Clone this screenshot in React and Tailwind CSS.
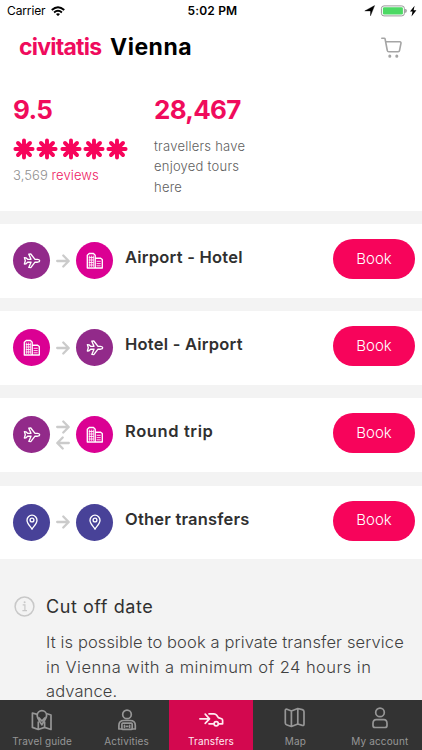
import React from "react";

const transfers = [
  { title: "Airport - Hotel", from: "plane", to: "hotel", spacing: "tracking-[0.0145em]" },
  { title: "Hotel - Airport", from: "hotel", to: "plane", spacing: "tracking-[0.0145em]" },
  { title: "Round trip", from: "plane", to: "hotel", spacing: "tracking-[0.037em]", round: true },
  { title: "Other transfers", from: "pin", to: "pin", spacing: "tracking-[0.013em]" },
];

const circleColors = {
  plane: "bg-[#922a8a]",
  hotel: "bg-[#db0093]",
  pin: "bg-[#484298]",
};

function Glyph({ type }) {
  return (
    <svg
      viewBox="0 0 18 18"
      className="size-[18px]"
      fill="none"
      stroke="white"
      strokeWidth="1.35"
      strokeLinejoin="round"
      strokeLinecap="round"
    >
      {type === "plane" && (
        <path d="M1.4 5.6 3 5.8 4.6 7.3H8L5.8 2.2 7.8 2 12 7.3H14.6C17.4 7.6 17.4 9.9 14.6 10.2H12L7.8 15.6 5.8 15.4 8 10.2H4.6L3 11.9 1.4 12 2.3 8.8Z" />
      )}
      {type === "hotel" && (
        <>
          <path d="M1.3 16V3.2L3.2 1.5H7.5L9.2 3.2V16ZM9.2 6.2H14.6L16.3 7.6V16H9.2" />
          <path
            d="M3.2 5.5H7.4M3.2 8H7.4M3.2 10.5H7.4M3.2 13H7.4M5.3 4V14.5M3.3 4V14.5M7.3 4V14.5M11 9.3H14.3M11 11.6H14.3M11 13.8H14.3"
            strokeWidth="0.85"
          />
        </>
      )}
      {type === "pin" && (
        <>
          <path d="M9 16.2C7.7 13.6 4 10.7 4 7.2A5 5 0 0 1 14 7.2C14 10.7 10.3 13.6 9 16.2Z" />
          <circle cx="9" cy="7" r="1.9" />
        </>
      )}
    </svg>
  );
}

function Circle({ type }) {
  return (
    <div className={`${circleColors[type]} size-[37px] rounded-full flex items-center justify-center`}>
      <Glyph type={type} />
    </div>
  );
}

function Arrow({ back }) {
  return (
    <svg
      viewBox="0 0 14 14"
      className={back ? "size-[14px] rotate-180" : "size-[14px]"}
      fill="none"
      stroke="#cbcbcb"
      strokeWidth="2.3"
      strokeLinecap="round"
      strokeLinejoin="round"
    >
      <path d="M1.2 7H12.4M7.3 1.5 12.7 7 7.3 12.5" />
    </svg>
  );
}

function Star() {
  return (
    <svg viewBox="0 0 22 22" className="size-[22px]" stroke="#f7045b" strokeWidth="3.9" strokeLinecap="round">
      <path d="M11 2.4V19.6M2.4 11H19.6M5 5 17 17M17 5 5 17" />
    </svg>
  );
}

function StatusBar() {
  return (
    <div className="h-[22px] flex items-center text-[12px] leading-none text-black relative">
      <span className="pl-[7px] w-[51px] tracking-[-0.01em]">Carrier</span>
      <svg viewBox="0 0 15 11" className="w-[14px] h-[10.5px]" fill="none" stroke="black" strokeWidth="2">
        <path d="M0.8 4.2Q7.5-1.8 14.2 4.2M3.3 6.9Q7.5 3.2 11.7 6.9" />
        <path d="M5.3 8.4Q7.5 6.7 9.7 8.4L7.5 10.7Z" fill="black" stroke="none" />
      </svg>
      <span className="ml-[122.5px] font-semibold tracking-[0.015em] whitespace-nowrap">5:02 PM</span>
      <svg viewBox="0 0 54 12" className="absolute left-[364px] top-[5px] w-[54px] h-[12px]">
        <path d="M10.6 0.6 6.5 10.8V5.9H0.8Z" fill="black" stroke="black" strokeWidth="0.4" />
        <rect x="17.4" y="0.9" width="23" height="10" rx="2.6" fill="none" stroke="#999" />
        <rect x="18.9" y="2.3" width="20" height="7.2" rx="1.3" fill="#4cd964" />
        <path d="M41.7 4.1Q43.2 5.8 41.7 7.6Z" fill="#888" stroke="#888" strokeWidth="0.6" />
        <path d="M50.6 0.8 46 6.6H48.5L47.5 11.4 52.4 5.3H49.6Z" fill="black" />
      </svg>
    </div>
  );
}

const tabs = [
  {
    label: "Travel guide",
    offset: "pt-[9px]",
    icon: (
      <>
        <path d="M7.2 5.4 2.4 4V18.4L8.3 20.5 14.6 18.4 21 20.5V6L17 4.8M8.3 13V20.5M14.6 13V18.4" />
        <path d="M11.8 15.8C10.2 12.7 7.2 9.9 7.2 6.3A4.7 4.7 0 0 1 16.6 6.3C16.6 9.9 13.3 12.7 11.8 15.8ZM9.2 9 11.9 12 14.7 9" />
      </>
    ),
  },
  {
    label: "Activities",
    offset: "pt-[9.5px]",
    icon: (
      <>
        <circle cx="12" cy="5.4" r="4.3" />
        <path d="M3.9 20V16.5Q3.9 11.5 8.9 11.5H15.1Q20.3 11.5 20.3 16.5V20H17.5M3.9 20H6.5" />
        <rect x="6.9" y="14.2" width="10.3" height="6.2" rx="1" />
        <path d="M9.5 16.3V18.3M14.6 16.3V18.3M11.5 17.3H12.6" />
      </>
    ),
  },
  {
    label: "Transfers",
    active: true,
    offset: "pt-[7px]",
    icon: (
      <>
        <path d="M0.9 11.8H9.4M6.2 7.2 10.5 11.8 6.2 16.4" />
        <path d="M10 6.8H15Q16.5 6.8 17.5 8.1L19.3 10.6 22.5 11.8Q23.6 12.2 23.6 13.3V16.8H19.6M14.7 16.8H10" />
        <circle cx="17.2" cy="16.8" r="2.1" />
      </>
    ),
  },
  {
    label: "Map",
    offset: "pt-[6.5px]",
    icon: <path d="M2.3 4.6Q2.3 2.7 4 3.2L8.4 5 14.8 2.5 19.3 3.6Q21 4 21 5.8V18Q21 19.8 19.3 19.4L14.8 18 8.4 20.5 4 19Q2.3 18.5 2.3 17ZM8.4 5V20.5M14.8 2.5V18" />,
  },
  {
    label: "My account",
    offset: "pt-[7px]",
    icon: (
      <>
        <circle cx="12" cy="5.4" r="4.3" />
        <path d="M8.2 12.6H15.8Q19 12.6 19 16.5V18.5Q19 20.5 17 20.5H7Q5 20.5 5 18.5V16.5Q5 12.6 8.2 12.6Z" />
      </>
    ),
  },
];

function TabBar() {
  return (
    <nav className="h-[50.5px] shrink-0 grid grid-cols-5 bg-[#333333]">
      {tabs.map((tab) => (
        <div
          key={tab.label}
          className={
            tab.active
              ? "flex flex-col items-center bg-[#d3084f] text-[#ffeaf1]"
              : "flex flex-col items-center text-[#969696]"
          }
        >
          <div className={`${tab.offset} h-[35px]`}>
            <svg
              viewBox="0 0 24 24"
              className="size-[24px] overflow-visible"
              fill="none"
              stroke="currentColor"
              strokeWidth="1.7"
              strokeLinecap="round"
              strokeLinejoin="round"
            >
              {tab.icon}
            </svg>
          </div>
          <span className="text-[10px] leading-[13px] tracking-[0.015em] whitespace-nowrap">
            {tab.label}
          </span>
        </div>
      ))}
    </nav>
  );
}

function App() {
  return (
    <div className="w-[422px] h-[750px] flex flex-col overflow-hidden bg-[#f3f3f3] font-['Inter',sans-serif]">
      <div className="bg-white shrink-0 h-[210.5px]">
        <StatusBar />
        <header className="h-[51px] pl-[19px] pr-[20px] flex items-center justify-between">
          <div className="flex items-center text-[23px] leading-none">
            <span className="w-[91px] whitespace-nowrap text-[#ef0b5d] font-bold tracking-[-0.033em]">civitatis</span>
            <span className="whitespace-nowrap text-black font-bold tracking-[0.022em]">Vienna</span>
          </div>
          <svg viewBox="0 0 21 21" className="size-[21px]" fill="none" stroke="#a5a5a5" strokeWidth="1.6" strokeLinecap="round" strokeLinejoin="round">
            <path d="M0.8 1.2H3.2Q3.9 1.2 4.1 2L6.3 13.5Q6.5 14.8 7.8 14.8H17.2Q18.3 14.8 18.5 13.7L20 6.2Q20.1 4.8 18.9 4.8H4.7" />
            <path d="M8.8 19.1V19.2M15.8 19.1V19.2" strokeWidth="3" />
          </svg>
        </header>

        <div className="flex pl-[13px] pt-[22px]">
          <div className="w-[141px]">
            <div className="text-[26px] leading-[30px] font-bold tracking-[-0.028em] text-[#f00b5c]">9.5</div>
            <div className="flex mt-[13px] gap-[1.3px]">
              <Star />
              <Star />
              <Star />
              <Star />
              <Star />
            </div>
            <div className="mt-[5px] text-[13px] leading-[20px] font-light tracking-[0.006em] text-[#909090] whitespace-nowrap">
              3,569 <span className="text-[#ee1762]">reviews</span>
            </div>
          </div>
          <div>
            <div className="text-[26px] leading-[30px] font-bold tracking-[-0.028em] text-[#f00b5c]">28,467</div>
            <p className="mt-[11px] text-[13px] leading-[20.3px] font-light tracking-[0.018em] text-[#606060] whitespace-nowrap">
              travellers have
              <br />
              enjoyed tours
              <br />
              here
            </p>
          </div>
        </div>
      </div>

      <div className="flex flex-col gap-[13.5px] mt-[13.5px] shrink-0">
        {transfers.map((item) => (
          <div key={item.title} className="h-[73.7px] bg-white flex items-start pl-[13.3px] pr-[7px]">
            <div className="flex items-center pt-[18px]">
              <Circle type={item.from} />
              <div className="w-[26.2px] flex flex-col items-center gap-[2px]">
                <Arrow />
                {item.round && <Arrow back />}
              </div>
              <Circle type={item.to} />
            </div>
            <h2 className={`${item.spacing} flex-1 pl-[11.5px] pt-[22px] text-[16.5px] leading-[22px] font-semibold text-[#303030] whitespace-nowrap`}>
              {item.title}
            </h2>
            <button className="mt-[15px] w-[82px] h-[40px] rounded-full bg-[#f7045b] text-white text-[15px] font-light">
              Book
            </button>
          </div>
        ))}
      </div>

      <section className="flex-1 min-h-0 flex pt-[36px] pl-[14px]">
        <svg viewBox="0 0 21 21" className="size-[21px] mt-[1px] shrink-0" fill="none" stroke="#c8c8c8" strokeWidth="1.5">
          <circle cx="10.5" cy="10.5" r="9.4" />
          <path d="M8.7 8.8H10.9V14.6M8.4 14.6H13" strokeWidth="1.2" />
          <circle cx="10.6" cy="6.3" r="1" fill="#c8c8c8" stroke="none" />
        </svg>
        <div className="pl-[11px] whitespace-nowrap">
          <h3 className="text-[18px] leading-[24px] tracking-[0.031em] text-[#303030]">Cut off date</h3>
          <p className="mt-[11px] text-[16.5px] leading-[24.4px] font-light tracking-[0.007em] text-[#404040]">
            It is possible to book a private transfer service
            <br />
            <span className="tracking-[0.027em]">in Vienna with a minimum of 24 hours in</span>
            <br />
            advance.
          </p>
        </div>
      </section>

      <TabBar />
    </div>
  );
}

export default App;
